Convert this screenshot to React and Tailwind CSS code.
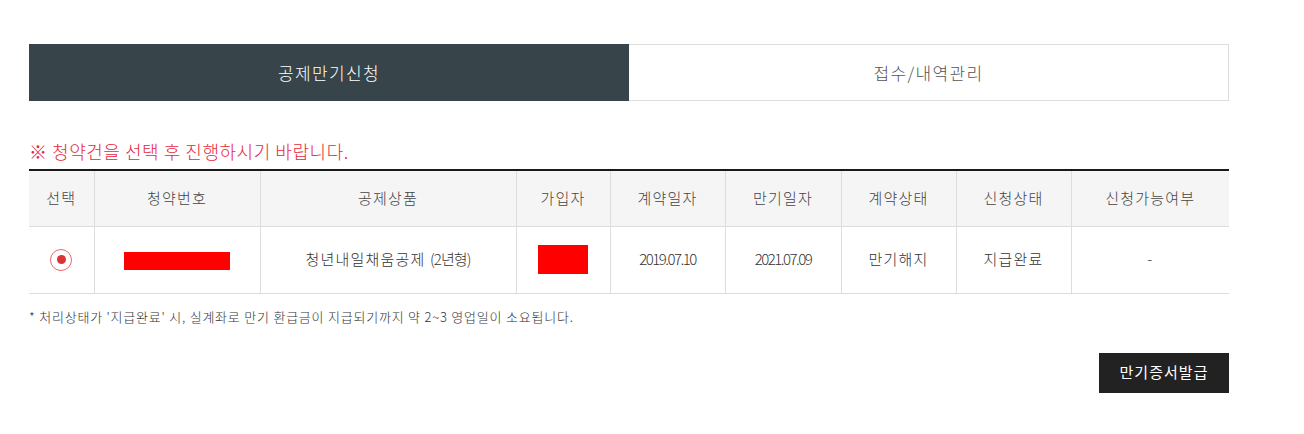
export default function App() {
  const font = { fontFamily: '"Noto Sans CJK KR", "Noto Sans", sans-serif' };
  const cols = [65, 166, 256, 94, 115, 116, 115, 115, 158];
  const heads = ["선택", "청약번호", "공제상품", "가입자", "계약일자", "만기일자", "계약상태", "신청상태", "신청가능여부"];
  return (
    <div className="w-[1304px] h-[434px] bg-white font-light" style={font}>
      <div className="w-[1200px] ml-[29px] pt-[44px]">
        <div className="flex h-[57px]">
          <div className="w-[600px] bg-[#374449] text-white text-[17px] tracking-[0.08em] flex items-center justify-center font-light">공제만기신청</div>
          <div className="w-[600px] border border-[#dddddd] border-l-0 text-[#555] text-[17px] tracking-[0.08em] flex items-center justify-center">접수/내역관리</div>
        </div>
        <div className="mt-[38px] text-[18px] leading-[24px] tracking-[0.03em] text-[#e6283b] font-light">※ 청약건을 선택 후 진행하시기 바랍니다.</div>
        <table className="mt-[6px] w-[1200px] border-collapse table-fixed border-t-2 border-[#1a1a1a]">
          <colgroup>
            {cols.map((w, i) => <col key={i} style={{ width: w }} />)}
          </colgroup>
          <thead>
            <tr className="h-[56px] bg-[#f5f5f5]">
              {heads.map((h, i) => (
                <th key={i} className={`font-light text-[15px] tracking-[0.08em] text-[#444] border-b border-[#dddddd] ${i > 0 ? "border-l" : ""}`}>{h}</th>
              ))}
            </tr>
          </thead>
          <tbody>
            <tr className="h-[67px] text-[15px] text-[#333] tracking-[0.08em]">
              <td className="border-b border-[#dddddd]">
                <div className="flex justify-center">
                  <div className="w-[22px] h-[22px] rounded-full border-[1.5px] border-[#e86a6a] flex items-center justify-center">
                    <div className="w-[9px] h-[9px] rounded-full bg-[#d93535]"></div>
                  </div>
                </div>
              </td>
              <td className="border-b border-l border-[#dddddd]">
                <div className="flex justify-center"><div className="w-[106px] h-[18px] bg-[#ff0000] mt-[2px]"></div></div>
              </td>
              <td className="border-b border-l border-[#dddddd] text-center">청년내일채움공제 <span className="tracking-[-0.06em]">(2년형)</span></td>
              <td className="border-b border-l border-[#dddddd]">
                <div className="flex justify-center"><div className="w-[50px] h-[29px] bg-[#ff0000]"></div></div>
              </td>
              <td className="border-b border-l border-[#dddddd] text-center text-[15px] tracking-[-0.1em]">2019.07.10</td>
              <td className="border-b border-l border-[#dddddd] text-center text-[15px] tracking-[-0.1em]">2021.07.09</td>
              <td className="border-b border-l border-[#dddddd] text-center">만기해지</td>
              <td className="border-b border-l border-[#dddddd] text-center">지급완료</td>
              <td className="border-b border-l border-[#dddddd] text-center">-</td>
            </tr>
          </tbody>
        </table>
        <div className="mt-[14px] text-[13px] leading-[18px] tracking-[0.06em] text-[#333]">* 처리상태가 '지급완료' 시, 실계좌로 만기 환급금이 지급되기까지 약 2~3 영업일이 소요됩니다.</div>
        <div className="flex justify-end mt-[27px]">
          <div className="w-[130px] h-[40px] bg-[#222] text-white text-[15px] tracking-[0.07em] font-normal flex items-center justify-center">만기증서발급</div>
        </div>
      </div>
    </div>
  );
}
